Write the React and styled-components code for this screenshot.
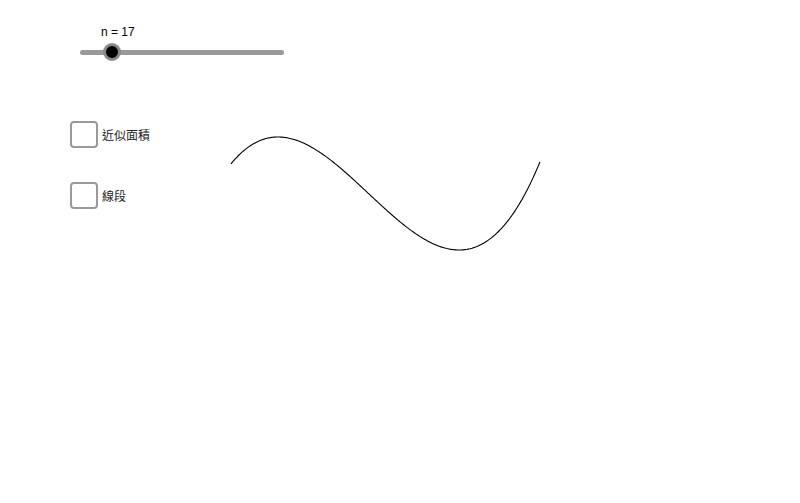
import React from 'react'
import styled, { createGlobalStyle } from 'styled-components'

const GlobalStyle = createGlobalStyle`
  html, body {
    margin: 0;
    padding: 0;
    background: #fff;
  }
  body {
    font-family: "Liberation Sans", Arial, sans-serif;
  }
`

const Canvas = styled.div`
  position: relative;
  width: 800px;
  height: 503px;
  overflow: hidden;
  background: #fff;
`

const Controls = styled.div`
  display: flex;
  flex-direction: column;
  padding-top: 25px;
`

const SliderBlock = styled.div`
  display: flex;
  flex-direction: column;
  gap: 4px;
  width: 204px;
  margin-left: 80px;
`

const SliderLabel = styled.div`
  padding-left: 21px;
  font-size: 12px;
  line-height: 14px;
  color: #000;
`

const TrackRow = styled.div`
  position: relative;
  height: 18px;
  display: flex;
  align-items: center;
`

const Track = styled.div`
  width: 100%;
  height: 5px;
  border-radius: 2.5px;
  background: #999;
`

const Thumb = styled.div`
  position: absolute;
  top: 0;
  left: ${p => p.$pos - 9}px;
  width: 12px;
  height: 12px;
  border-radius: 50%;
  background: #000;
  border: 3px solid #8a8a8a;
`

const Options = styled.div`
  display: flex;
  flex-direction: column;
  gap: 34px;
  margin-top: 60px;
  margin-left: 70px;
`

const OptionRow = styled.label`
  display: flex;
  align-items: center;
  gap: 4px;
`

const Box = styled.span`
  box-sizing: border-box;
  width: 28px;
  height: 27px;
  border: 2px solid #9a9a9a;
  border-radius: 4px;
  background: #fff;
`

const OptionText = styled.span`
  font-family: "Noto Sans CJK TC", "Noto Sans CJK SC", sans-serif;
  font-size: 12px;
  line-height: 14px;
  color: #222;
`

const Graph = styled.svg`
  position: absolute;
  left: 0;
  top: 0;
  pointer-events: none;
`

const curvePoints = () => {
  const x0 = 278
  const d = 181
  const a = -226 / (d * d * d)
  const pts = []
  for (let x = 231; x <= 540; x += 1) {
    const t = x - x0
    const y = a * (t * t * t - 1.5 * d * t * t) + 137
    pts.push(`${x},${y.toFixed(2)}`)
  }
  return pts.join(' ')
}

const Checkbox = ({ label }) => (
  <OptionRow>
    <Box />
    <OptionText>{label}</OptionText>
  </OptionRow>
)

const App = () => (
  <>
    <GlobalStyle />
    <Canvas>
      <Controls>
        <SliderBlock>
          <SliderLabel>n = 17</SliderLabel>
          <TrackRow>
            <Track />
            <Thumb $pos={32} />
          </TrackRow>
        </SliderBlock>
        <Options>
          <Checkbox label="近似面積" />
          <Checkbox label="線段" />
        </Options>
      </Controls>
      <Graph width="800" height="503" viewBox="0 0 800 503">
        <polyline points={curvePoints()} fill="none" stroke="#000" strokeWidth="1.1" />
      </Graph>
    </Canvas>
  </>
)

export default App
